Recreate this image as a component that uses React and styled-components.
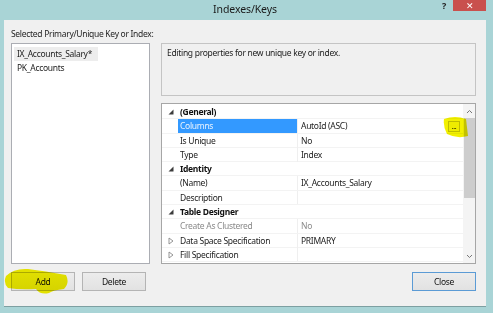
import React from 'react';
import styled, { createGlobalStyle } from 'styled-components';

const GlobalStyle = createGlobalStyle`
  html, body {
    margin: 0;
    padding: 0;
  }
  body {
    font-family: "Noto Sans", "Open Sans", sans-serif;
    font-size: 8.5px;
    letter-spacing: -0.3px;
    color: #000;
  }
  * {
    box-sizing: border-box;
  }
`;

const Frame = styled.div`
  position: relative;
  width: 493px;
  height: 313px;
  display: flex;
  flex-direction: column;
  padding: 0 7px 6px 4px;
  background: #a9d4d6;
  overflow: hidden;
`;

/* Title bar */
const TitleBar = styled.div`
  height: 20px;
  display: grid;
  grid-template-columns: 1fr auto 1fr;
  align-items: start;
`;

const Title = styled.div`
  grid-column: 2;
  padding-top: 3px;
  font-size: 10.5px;
  letter-spacing: -0.1px;
  line-height: 13px;
  color: #1a1a1a;
`;

const Controls = styled.div`
  grid-column: 3;
  display: flex;
  justify-content: flex-end;
  align-items: flex-start;
  gap: 7px;
`;

const Help = styled.span`
  padding-top: 1px;
  font-size: 9px;
  font-weight: 700;
  line-height: 9px;
  color: #222;
`;

const CloseX = styled.div`
  width: 33px;
  height: 11px;
  display: flex;
  justify-content: center;
  align-items: center;
  background: #c9504d;
  color: #fff;
  font-size: 9px;
  line-height: 9px;
`;

/* Body */
const Body = styled.div`
  flex: 1;
  display: flex;
  flex-direction: column;
  padding: 8px 10px 0 7px;
  background: #f0f0f0;
  border-bottom: 1px solid #7d9fa1;
`;

const Label = styled.div`
  height: 15px;
  line-height: 12px;
  color: #1e1e1e;
`;

const Main = styled.div`
  height: 221px;
  display: flex;
  gap: 11px;
`;

const ListBox = styled.ul`
  width: 139px;
  margin: 0;
  padding: 3px 2px;
  list-style: none;
  background: #fff;
  border: 1px solid #abadb3;
`;

const ListItem = styled.li`
  width: ${(p) => (p.selected ? '84px' : 'auto')};
  height: 14px;
  padding-left: 3px;
  line-height: 14px;
  color: #222;
  background: ${(p) => (p.selected ? '#ededed' : 'transparent')};
`;

const RightColumn = styled.div`
  flex: 1;
  display: flex;
  flex-direction: column;
  gap: 7px;
`;

const Description = styled.div`
  height: 53px;
  padding: 3px 5px;
  line-height: 12px;
  background: #f0f0f0;
  border: 1px solid #c4c4c4;
  color: #222;
`;

const Grid = styled.div`
  flex: 1;
  display: flex;
  background: #fff;
  border: 1px solid #a6a6a6;
`;

const Rows = styled.div`
  flex: 1;
  padding-top: 1px;
`;

const Row = styled.div`
  height: 14.3px;
  display: grid;
  grid-template-columns: 16px 120px 1fr;
  align-items: stretch;
  line-height: 14px;
  border-bottom: 1px solid #f3f3f3;
`;

const Gutter = styled.div`
  display: flex;
  justify-content: center;
  align-items: center;
  padding-left: 1px;
`;

const CategoryLabel = styled.div`
  grid-column: 2 / span 2;
  padding-left: 2px;
  font-weight: 700;
  color: #111;
`;

const NameCell = styled.div`
  padding-left: 2px;
  white-space: nowrap;
  overflow: hidden;
  background: ${(p) => (p.selected ? '#3399ff' : 'transparent')};
  color: ${(p) => (p.selected ? '#eaf4ff' : p.disabled ? '#8a8a8a' : '#222')};
  border-right: 1px solid #efefef;
`;

const ValueCell = styled.div`
  display: flex;
  align-items: center;
  justify-content: space-between;
  padding: 0 3px 0 3px;
  white-space: nowrap;
  color: ${(p) => (p.disabled ? '#8a8a8a' : '#222')};
`;

const Ellipsis = styled.span`
  width: 12px;
  height: 11px;
  display: flex;
  justify-content: center;
  align-items: flex-end;
  font-size: 7px;
  line-height: 8px;
  border: 1px solid #c9c9a0;
  background: #fbfbd8;
`;

const ScrollBar = styled.div`
  width: 12px;
  display: flex;
  flex-direction: column;
  align-items: center;
  background: #f4f4f4;
`;

const Arrow = styled.div`
  height: 14px;
  display: flex;
  align-items: center;
`;

const Thumb = styled.div`
  width: 11px;
  height: 80px;
  background: #cdcdcd;
`;

const Track = styled.div`
  flex: 1;
`;

/* Buttons */
const ButtonRow = styled.div`
  margin-top: 8px;
  display: flex;
  justify-content: space-between;
`;

const ButtonGroup = styled.div`
  display: flex;
  gap: 7px;
`;

const Button = styled.button`
  width: 64px;
  height: 19px;
  padding: 0;
  font-family: inherit;
  font-size: 8.5px;
  letter-spacing: inherit;
  color: #111;
  background: linear-gradient(#ececec, #e2e2e2);
  border: 1px solid ${(p) => (p.primary ? '#5b9bd5' : '#b4b4b4')};
`;

const Highlight = styled.svg`
  position: absolute;
  top: 0;
  left: 0;
  pointer-events: none;
  mix-blend-mode: multiply;
`;

const Expanded = () => (
  <svg width="6" height="6" viewBox="0 0 6 6">
    <polygon points="5.5,0.5 5.5,5.5 0.5,5.5" fill="#3c3c3c" />
  </svg>
);

const Collapsed = () => (
  <svg width="6" height="8" viewBox="0 0 6 8">
    <polygon points="1,1 5,4 1,7" fill="none" stroke="#8a8a8a" strokeWidth="0.9" />
  </svg>
);

const Chevron = ({ up }) => (
  <svg width="7" height="5" viewBox="0 0 7 5">
    <polyline
      points={up ? '1,4 3.5,1.5 6,4' : '1,1 3.5,3.5 6,1'}
      fill="none"
      stroke="#777"
      strokeWidth="1"
    />
  </svg>
);

const rows = [
  { category: '(General)' },
  { name: 'Columns', value: 'AutoId (ASC)', selected: true, ellipsis: true },
  { name: 'Is Unique', value: 'No' },
  { name: 'Type', value: 'Index' },
  { category: 'Identity' },
  { name: '(Name)', value: 'IX_Accounts_Salary' },
  { name: 'Description', value: '' },
  { category: 'Table Designer' },
  { name: 'Create As Clustered', value: 'No', disabled: true },
  { name: 'Data Space Specification', value: 'PRIMARY', expandable: true },
  { name: 'Fill Specification', value: '', expandable: true },
];

const App = () => (
  <>
    <GlobalStyle />
    <Frame>
      <TitleBar>
        <Title>Indexes/Keys</Title>
        <Controls>
          <Help>?</Help>
          <CloseX>✕</CloseX>
        </Controls>
      </TitleBar>

      <Body>
        <Label>Selected Primary/Unique Key or Index:</Label>
        <Main>
          <ListBox>
            <ListItem selected>IX_Accounts_Salary*</ListItem>
            <ListItem>PK_Accounts</ListItem>
          </ListBox>

          <RightColumn>
            <Description>Editing properties for new unique key or index.</Description>
            <Grid>
              <Rows>
                {rows.map((r, i) =>
                  r.category ? (
                    <Row key={i}>
                      <Gutter>
                        <Expanded />
                      </Gutter>
                      <CategoryLabel>{r.category}</CategoryLabel>
                    </Row>
                  ) : (
                    <Row key={i}>
                      <Gutter>{r.expandable && <Collapsed />}</Gutter>
                      <NameCell selected={r.selected} disabled={r.disabled}>
                        {r.name}
                      </NameCell>
                      <ValueCell disabled={r.disabled}>
                        <span>{r.value}</span>
                        {r.ellipsis && <Ellipsis>...</Ellipsis>}
                      </ValueCell>
                    </Row>
                  )
                )}
              </Rows>
              <ScrollBar>
                <Arrow>
                  <Chevron up />
                </Arrow>
                <Thumb />
                <Track />
                <Arrow>
                  <Chevron />
                </Arrow>
              </ScrollBar>
            </Grid>
          </RightColumn>
        </Main>

        <ButtonRow>
          <ButtonGroup>
            <Button>Add</Button>
            <Button>Delete</Button>
          </ButtonGroup>
          <Button primary>Close</Button>
        </ButtonRow>
      </Body>

      {/* marker scribbles */}
      <Highlight width="493" height="313" viewBox="0 0 493 313">
        <path
          d="M444 119 Q455 115 466 119 L468 136 Q457 139 447 134 Q443 127 444 119 Z"
          fill="#f2f000"
        />
        <path
          d="M6 276 Q14 268 28 269 Q45 271 66 275 Q70 283 64 289 Q53 290 49 293 Q40 295 36 289 Q20 290 8 288 Q3 283 6 276 Z"
          fill="#f2f000"
        />
      </Highlight>
    </Frame>
  </>
);

export default App;
